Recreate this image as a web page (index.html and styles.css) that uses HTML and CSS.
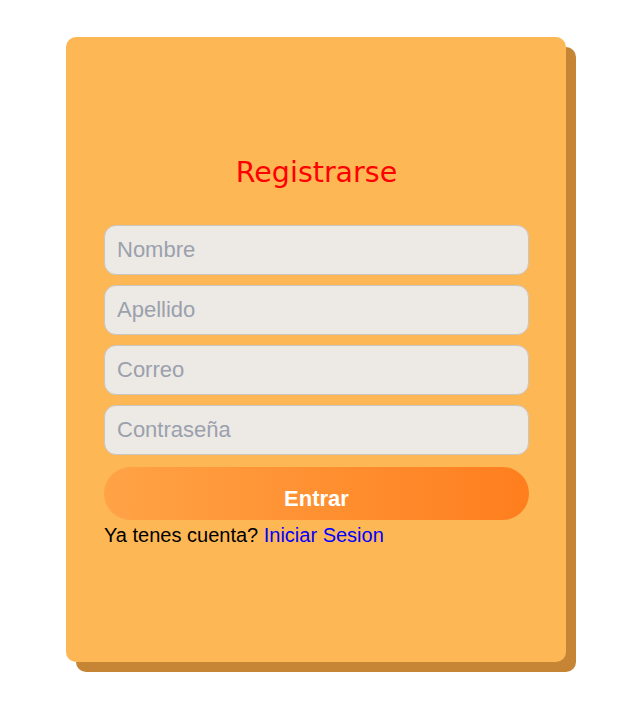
FILE: index.html
```html
<!DOCTYPE html>
<html lang="es">
<head>
<meta charset="utf-8">
<title>Registrarse</title>
<link rel="stylesheet" href="styles.css">
</head>
<body>
<div class="page">
  <form class="card">
    <h2 class="title">Registrarse</h2>
    <div class="fields">
      <input class="field" type="text" placeholder="Nombre">
      <input class="field" type="text" placeholder="Apellido">
      <input class="field" type="email" placeholder="Correo">
      <input class="field" type="password" placeholder="Contraseña">
    </div>
    <button class="submit" type="button">Entrar</button>
    <p class="note">Ya tenes cuenta? <a class="link" href="#">Iniciar Sesion</a></p>
  </form>
</div>
</body>
</html>
```

FILE: styles.css
```css
html, body {
  margin: 0;
  padding: 0;
  background: #ffffff;
}
.page {
  display: flex;
  justify-content: center;
  padding-top: 37px;
  padding-bottom: 48px;
}
.card {
  box-sizing: border-box;
  width: 500px;
  height: 625px;
  background: #fdb855;
  border-radius: 10px;
  box-shadow: 10px 10px 0 #c68535;
  padding: 121px 37px 0 38px;
  display: flex;
  flex-direction: column;
  font-family: "Liberation Sans", Arial, sans-serif;
}
.title {
  margin: 0 0 37px 0;
  height: 30px;
  line-height: 30px;
  text-align: center;
  font-family: "DejaVu Sans", Verdana, sans-serif;
  font-weight: normal;
  font-size: 28.5px;
  color: #ff0000;
}
.fields {
  display: flex;
  flex-direction: column;
  gap: 10px;
}
.field {
  box-sizing: border-box;
  width: 100%;
  height: 50px;
  margin: 0;
  padding: 0 12px;
  border: 1px solid #c9c6c2;
  border-radius: 12px;
  background: #ede9e5;
  font-family: "Liberation Sans", Arial, sans-serif;
  font-size: 22px;
  color: #333;
  outline: none;
}
.field::placeholder {
  color: #9aa1ad;
}
.submit {
  margin-top: 12px;
  height: 53px;
  width: 100%;
  border: none;
  border-radius: 27px;
  background: linear-gradient(to right, #ffa346, #ff7e1e);
  color: #ffffff;
  font-family: "Liberation Sans", Arial, sans-serif;
  font-weight: bold;
  font-size: 22px;
  padding-top: 11px;
}
.note {
  margin: 3px 0 0 0;
  font-size: 20px;
  line-height: 24px;
  color: #000000;
}
.link {
  color: #0000ff;
  text-decoration: none;
}
```
